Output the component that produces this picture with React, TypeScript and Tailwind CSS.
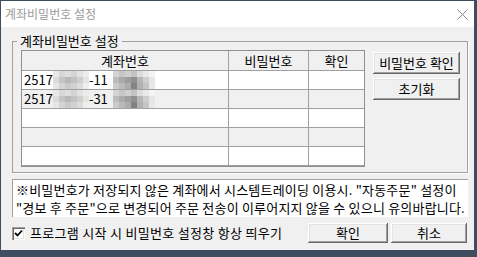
import React from "react";

const FONT = "font-['Noto_Sans_CJK_KR',sans-serif]";

const BTN =
  "flex items-center justify-center bg-[#f0f0f0] text-[13px] text-black shadow-[inset_-1px_-1px_#696969,inset_1px_1px_#ffffff,inset_-2px_-2px_#a0a0a0,inset_2px_2px_#e3e3e3]";

// pixelated blocks that hide the account digits
const mosaicA = [
  ["bg-[#e8e8e8]", "bg-[#d8d8d8]", "bg-[#dedede]", "bg-[#d4d4d4]", "bg-[#e2e2e2]", "bg-[#ececec]"],
  ["bg-[#dcdcdc]", "bg-[#c4c4c4]", "bg-[#b8b8b8]", "bg-[#c2c2c2]", "bg-[#cfcfcf]", "bg-[#e4e4e4]"],
  ["bg-[#e6e6e6]", "bg-[#d4d4d4]", "bg-[#cacaca]", "bg-[#d2d2d2]", "bg-[#dcdcdc]", "bg-[#eeeeee]"],
];

const mosaicB = [
  ["bg-[#d4d4d4]", "bg-[#c6c6c6]", "bg-[#d0d0d0]", "bg-[#c4c4c4]", "bg-[#dcdcdc]", "bg-[#eaeaea]", "bg-[#f4f4f4]"],
  ["bg-[#bcbcbc]", "bg-[#aaaaaa]", "bg-[#9e9e9e]", "bg-[#909090]", "bg-[#b6b6b6]", "bg-[#cecece]", "bg-[#e6e6e6]"],
  ["bg-[#cacaca]", "bg-[#bababa]", "bg-[#acacac]", "bg-[#828282]", "bg-[#b2b2b2]", "bg-[#c6c6c6]", "bg-[#e8e8e8]"],
];

function Mosaic({ cells }: { cells: string[][] }) {
  return (
    <div className="flex flex-col">
      {cells.map((row, i) => (
        <div key={i} className="flex">
          {row.map((c, j) => (
            <div key={j} className={`w-[6px] h-[6px] ${c}`} />
          ))}
        </div>
      ))}
    </div>
  );
}

function Account({ mid }: { mid: string }) {
  return (
    <div className="flex items-center h-full pl-[2px]">
      <span>2517</span>
      <Mosaic cells={mosaicA} />
      <span>{mid}</span>
      <div className="w-[5px]" />
      <Mosaic cells={mosaicB} />
    </div>
  );
}

const rows = [
  { acct: "-11", bg: "bg-white" },
  { acct: "-31", bg: "bg-[#f0f0f0]" },
  { acct: "", bg: "bg-white" },
  { acct: "", bg: "bg-[#f0f0f0]" },
  { acct: "", bg: "bg-white" },
];

export default function App() {
  return (
    <div className={`w-[477px] h-[257px] bg-[#3f4d61] pt-[1px] pl-[1px] overflow-hidden ${FONT}`}>
      <div className="w-[473px] h-[249px] flex flex-col">
        {/* title bar */}
        <div className="h-[26px] bg-white flex items-center justify-between pl-[4px] pr-[6px]">
          <span className="text-[12px] text-[#9a9a9a]">계좌비밀번호 설정</span>
          <svg width="11" height="11" viewBox="0 0 11 11">
            <path d="M0.5 0.5L10.5 10.5M10.5 0.5L0.5 10.5" stroke="#8a8a8a" strokeWidth="1" />
          </svg>
        </div>

        <div className="flex-1 bg-[#f0f0f0] pl-[11px] pt-[7px] text-[13px] text-black">
          {/* group box */}
          <fieldset className="w-[456px] border border-[#a0a0a0] shadow-[1px_1px_0_#ffffff] pl-[8px] pr-[7px] pt-[2px] pb-[5px]">
            <legend className="ml-[-4px] px-[3px] leading-[14px] text-[13px]">계좌비밀번호 설정</legend>
            <div className="flex gap-[8px]">
              {/* list */}
              <div className="w-[344px] h-[117px] border border-[#8f8f8f] bg-white flex flex-col leading-[18px]">
                <div className="h-[20px] flex bg-[#f0f0f0] border-b border-[#a0a0a0]">
                  <div className="w-[207px] border-r border-[#a0a0a0] flex items-center justify-center">계좌번호</div>
                  <div className="w-[80px] border-r border-[#a0a0a0] flex items-center justify-center">비밀번호</div>
                  <div className="flex-1 flex items-center justify-center">확인</div>
                </div>
                {rows.map((r, i) => (
                  <div key={i} className={`h-[19px] flex border-b border-[#a0a0a0] ${r.bg}`}>
                    <div className="w-[207px] border-r border-[#a0a0a0]">
                      {r.acct && <Account mid={r.acct} />}
                    </div>
                    <div className="w-[80px] border-r border-[#a0a0a0]" />
                    <div className="flex-1" />
                  </div>
                ))}
              </div>
              {/* side buttons */}
              <div className="flex flex-col gap-[4px] pt-[2px]">
                <div className={`w-[87px] h-[22px] ${BTN}`}>비밀번호 확인</div>
                <div className={`w-[87px] h-[22px] ${BTN}`}>초기화</div>
              </div>
            </div>
          </fieldset>

          {/* notice */}
          <div className="mt-[6px] w-[456px] h-[38px] bg-white border-t border-l border-[#a0a0a0] pl-[3px] pt-[1px] leading-[18px] tracking-[0.2px] whitespace-nowrap overflow-hidden">
            <div>※비밀번호가 저장되지 않은 계좌에서 시스템트레이딩 이용시. "자동주문" 설정이</div>
            <div>"경보 후 주문"으로 변경되어 주문 전송이 이루어지지 않을 수 있으니 유의바랍니다.</div>
          </div>

          {/* bottom row */}
          <div className="mt-[6px] w-[455px] h-[20px] flex items-center">
            <div className="w-[13px] h-[13px] bg-white flex items-center justify-center shadow-[inset_1px_1px_#a0a0a0,inset_2px_2px_#696969,inset_-1px_-1px_#ffffff,inset_-2px_-2px_#e3e3e3]">
              <svg width="9" height="9" viewBox="0 0 9 9">
                <path d="M1 4L3.5 6.5L8 1.5" stroke="#000" strokeWidth="1.8" fill="none" />
              </svg>
            </div>
            <span className="ml-[5px] tracking-[0.3px]">프로그램 시작 시 비밀번호 설정창 항상 띄우기</span>
            <div className="ml-auto flex gap-[3px]">
              <div className={`w-[80px] h-[20px] ${BTN}`}>확인</div>
              <div className={`w-[76px] h-[20px] ${BTN}`}>취소</div>
            </div>
          </div>
        </div>
      </div>
    </div>
  );
}
